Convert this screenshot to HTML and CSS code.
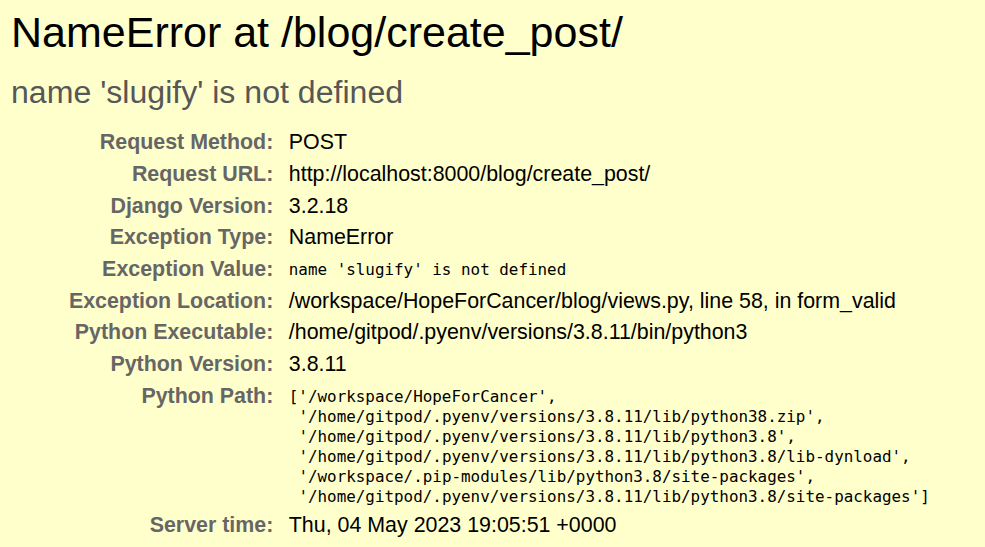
FILE: index.html
```html
<!DOCTYPE html>
<html>
<head>
<meta charset="utf-8">
<title>NameError at /blog/create_post/</title>
<link rel="stylesheet" href="styles.css">
</head>
<body>
<div class="summary">
  <h1 class="title">NameError at /blog/create_post/</h1>
  <pre class="exception-value">name 'slugify' is not defined</pre>
  <table class="meta">
    <tbody>
      <tr><th>Request Method:</th><td>POST</td></tr>
      <tr><th>Request URL:</th><td>http://localhost:8000/blog/create_post/</td></tr>
      <tr><th>Django Version:</th><td>3.2.18</td></tr>
      <tr><th>Exception Type:</th><td>NameError</td></tr>
      <tr><th>Exception Value:</th><td><pre class="mono">name 'slugify' is not defined</pre></td></tr>
      <tr><th>Exception Location:</th><td><span class="fname">/workspace/HopeForCancer/blog/views.py</span>, line 58, in form_valid</td></tr>
      <tr><th>Python Executable:</th><td>/home/gitpod/.pyenv/versions/3.8.11/bin/python3</td></tr>
      <tr><th>Python Version:</th><td>3.8.11</td></tr>
      <tr><th>Python Path:</th><td><pre class="mono">['/workspace/HopeForCancer',
 '/home/gitpod/.pyenv/versions/3.8.11/lib/python38.zip',
 '/home/gitpod/.pyenv/versions/3.8.11/lib/python3.8',
 '/home/gitpod/.pyenv/versions/3.8.11/lib/python3.8/lib-dynload',
 '/workspace/.pip-modules/lib/python3.8/site-packages',
 '/home/gitpod/.pyenv/versions/3.8.11/lib/python3.8/site-packages']</pre></td></tr>
      <tr><th>Server time:</th><td>Thu, 04 May 2023 19:05:51 +0000</td></tr>
    </tbody>
  </table>
</div>
</body>
</html>
```
FILE: styles.css
```css
html, body {
  margin: 0;
  padding: 0;
}
body {
  background: #ffffcc;
  color: #000;
  font-family: "Liberation Sans", Arial, sans-serif;
  font-size: 21.4px;
  overflow: hidden;
}
.summary {
  padding: 8px 10px 16px 11px;
  background: #ffffcc;
}
.title {
  margin: 0;
  font-size: 43px;
  font-weight: normal;
  line-height: normal;
}
.exception-value {
  margin: 16.5px 0;
  font-family: "Liberation Sans", Arial, sans-serif;
  font-size: 32.1px;
  color: #575757;
  white-space: pre-wrap;
}
.meta {
  border: none;
  border-collapse: collapse;
  background: transparent;
  width: 100%;
}
.meta th,
.meta td {
  vertical-align: top;
  line-height: 25.1px;
  padding: 3.3px 3.3px;
}
.meta th {
  width: 259px;
  text-align: right;
  color: #666;
  font-weight: bold;
  padding-right: 12px;
  white-space: nowrap;
}
.meta td {
  padding-left: 3.5px;
}
.mono {
  margin: 0;
  font-family: "DejaVu Sans Mono", "Liberation Mono", monospace;
  font-size: 15.9px;
  line-height: 20px;
  white-space: pre-wrap;
  padding-top: 3px;
}
```
